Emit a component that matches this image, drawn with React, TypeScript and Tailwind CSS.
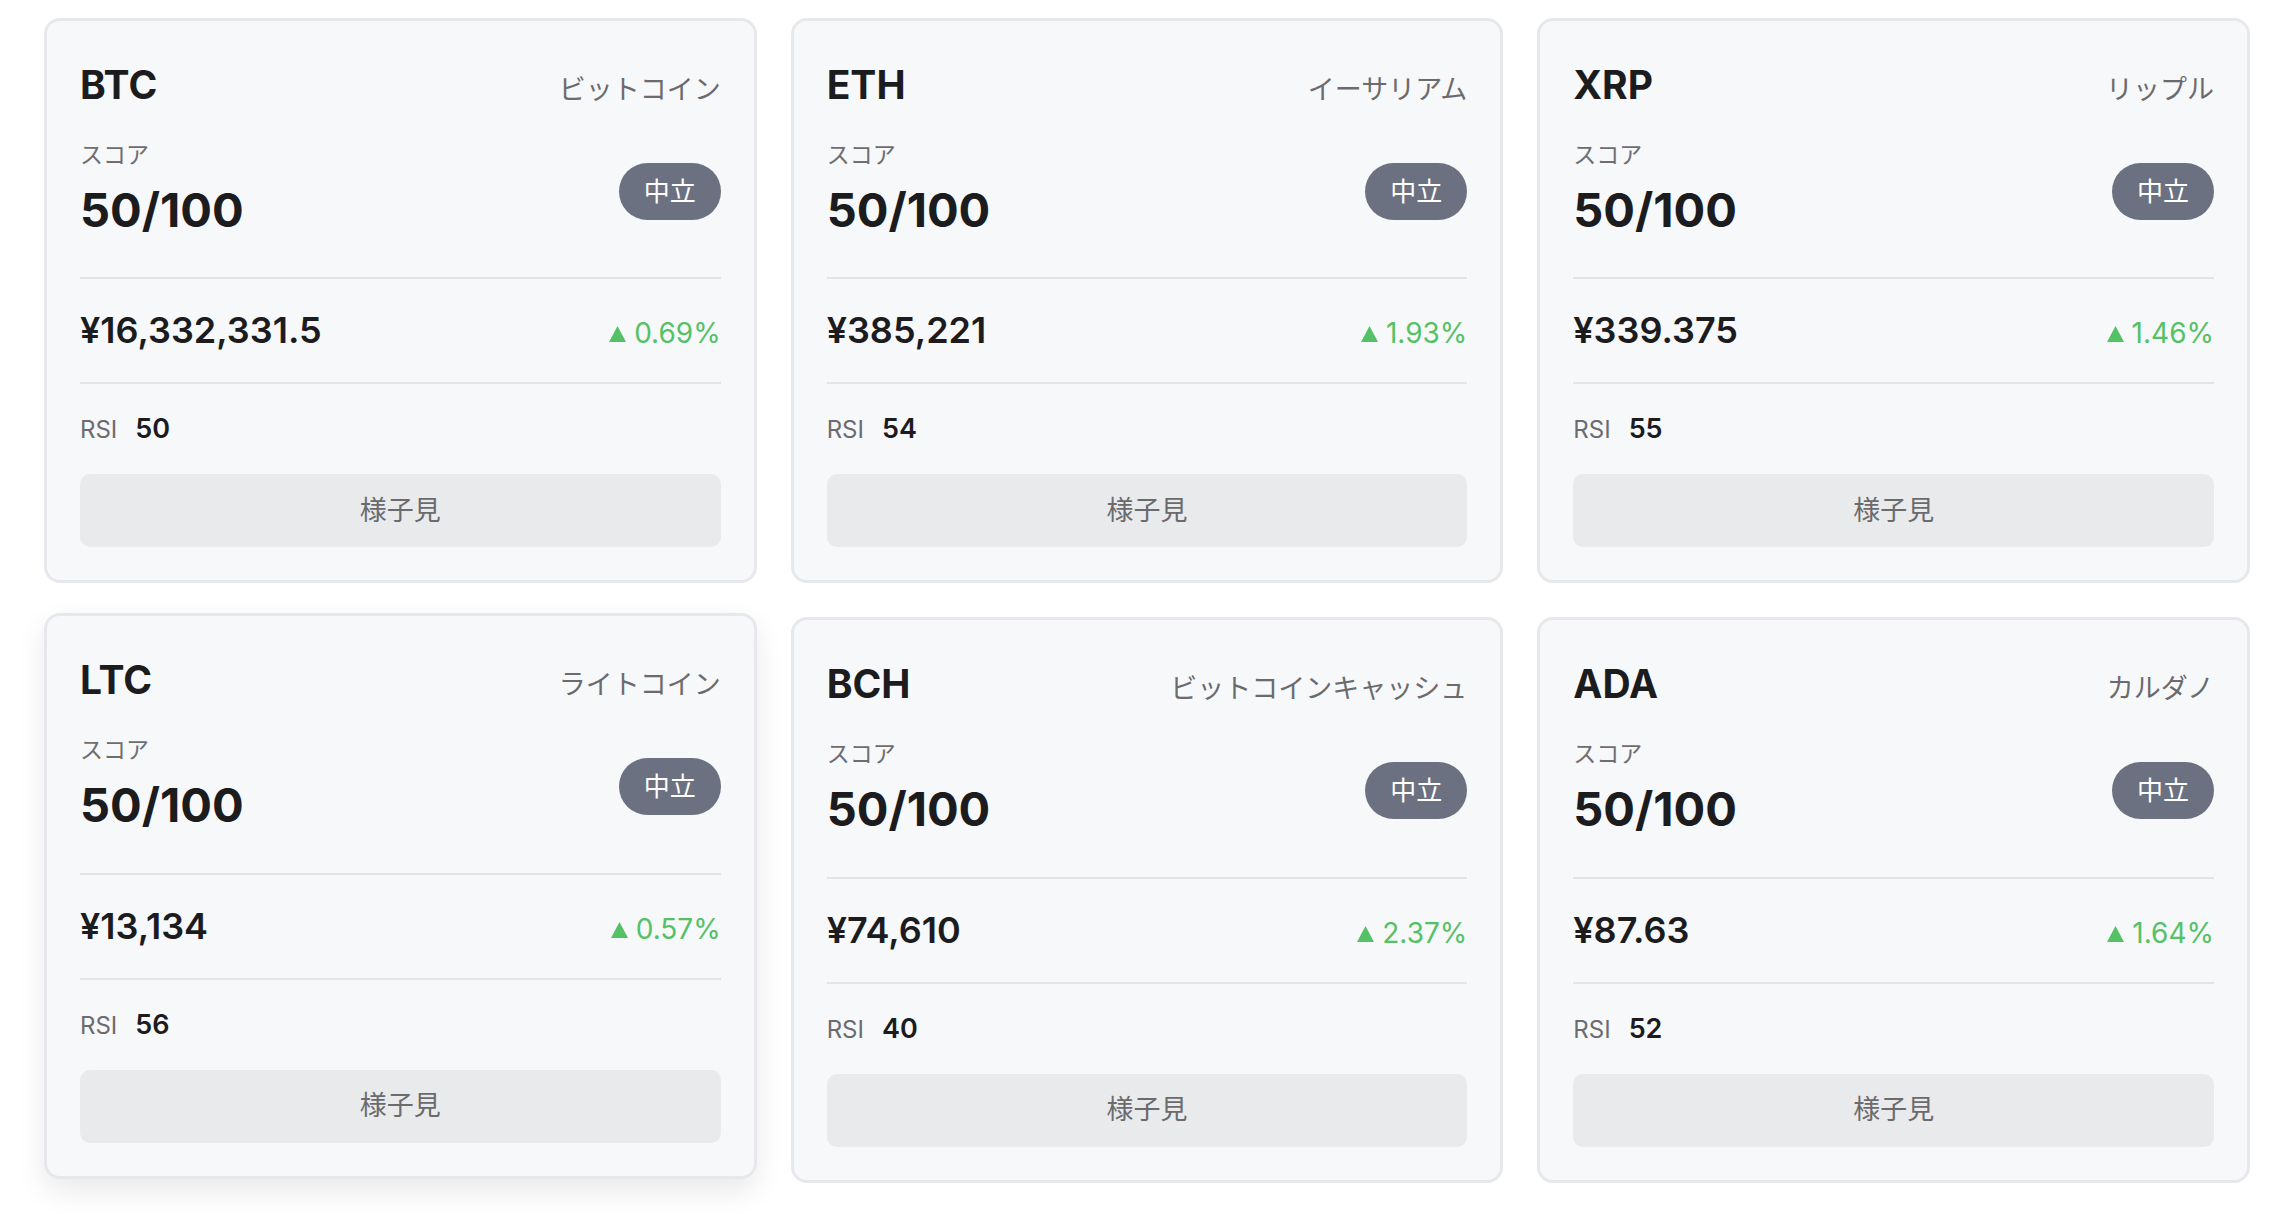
import React from 'react';

type Coin = {
  symbol: string;
  name: string;
  price: string;
  change: string;
  rsi: number;
  hovered?: boolean;
};

const coins: Coin[] = [
  { symbol: 'BTC', name: 'ビットコイン', price: '¥16,332,331.5', change: '0.69%', rsi: 50 },
  { symbol: 'ETH', name: 'イーサリアム', price: '¥385,221', change: '1.93%', rsi: 54 },
  { symbol: 'XRP', name: 'リップル', price: '¥339.375', change: '1.46%', rsi: 55 },
  { symbol: 'LTC', name: 'ライトコイン', price: '¥13,134', change: '0.57%', rsi: 56, hovered: true },
  { symbol: 'BCH', name: 'ビットコインキャッシュ', price: '¥74,610', change: '2.37%', rsi: 40 },
  { symbol: 'ADA', name: 'カルダノ', price: '¥87.63', change: '1.64%', rsi: 52 },
];

const UpTriangle = () => (
  <svg width="17" height="16" viewBox="0 0 17 16" className="inline-block align-[1px] mr-[8px]">
    <path d="M8.5 0 L17 16 L0 16 Z" fill="#55c166" />
  </svg>
);

const CoinCard: React.FC<{ coin: Coin }> = ({ coin }) => {
  return (
    <div
      className={
        coin.hovered
          ? 'rounded-[16px] border-[3px] border-[#e7e8eb] bg-[#f7f8fa] px-[33px] pt-[33px] pb-[33px] -translate-y-[4px] shadow-[0_12px_30px_rgba(0,0,0,0.09)]'
          : 'rounded-[16px] border-[3px] border-[#e7e8eb] bg-[#f7f8fa] px-[33px] pt-[33px] pb-[33px]'
      }>
      {/* header */}
      <div className="flex items-baseline justify-between leading-[62px]">
        <span className="text-[39px] font-bold text-[#1c1c1e]">{coin.symbol}</span>
        <span className="text-[27px] text-[#6b6b6e]">{coin.name}</span>
      </div>

      {/* score */}
      <div className="mt-[18px] flex items-center justify-between">
        <div>
          <div className="text-[23px] leading-[33px] text-[#6e6e72]">スコア</div>
          <div className="mt-[10px] text-[47px] font-bold leading-[1.2] text-[#1c1c1e]">50/100</div>
        </div>
        <div className="mt-[5px] flex h-[57px] items-center rounded-full bg-[#6b7180] px-[25px] text-[26px] text-white">
          中立
        </div>
      </div>

      {/* price */}
      <div className="mt-[39px] flex items-baseline justify-between border-y-2 border-[#e3e4e7] pt-[30px] pb-[28px]">
        <span className="text-[36px] font-semibold leading-[1.2] text-[#1c1c1e]">{coin.price}</span>
        <span className="text-[28px] text-[#55c166]">
          <UpTriangle />
          {coin.change}
        </span>
      </div>

      {/* rsi */}
      <div className="flex items-baseline gap-[18px] pt-[28px]">
        <span className="text-[24px] text-[#6b6b70]">RSI</span>
        <span className="text-[27px] font-semibold leading-[1.2] text-[#1c1c1e]">{coin.rsi}</span>
      </div>

      <button
        type="button"
        className="mt-[26px] flex h-[73px] w-full items-center justify-center rounded-[10px] bg-[#e9eaec] text-[27px] text-[#6b6b6e]">
        様子見
      </button>
    </div>
  );
};

export default function App() {
  return (
    <div
      className="min-h-screen bg-white pl-[44px] pr-[36px] pt-[18px]"
      style={{ fontFamily: "Inter, 'Noto Sans CJK JP', sans-serif" }}>
      <div className="grid grid-cols-3 gap-[34px]">
        {coins.map((c) => (
          <CoinCard key={c.symbol} coin={c} />
        ))}
      </div>
    </div>
  );
}
